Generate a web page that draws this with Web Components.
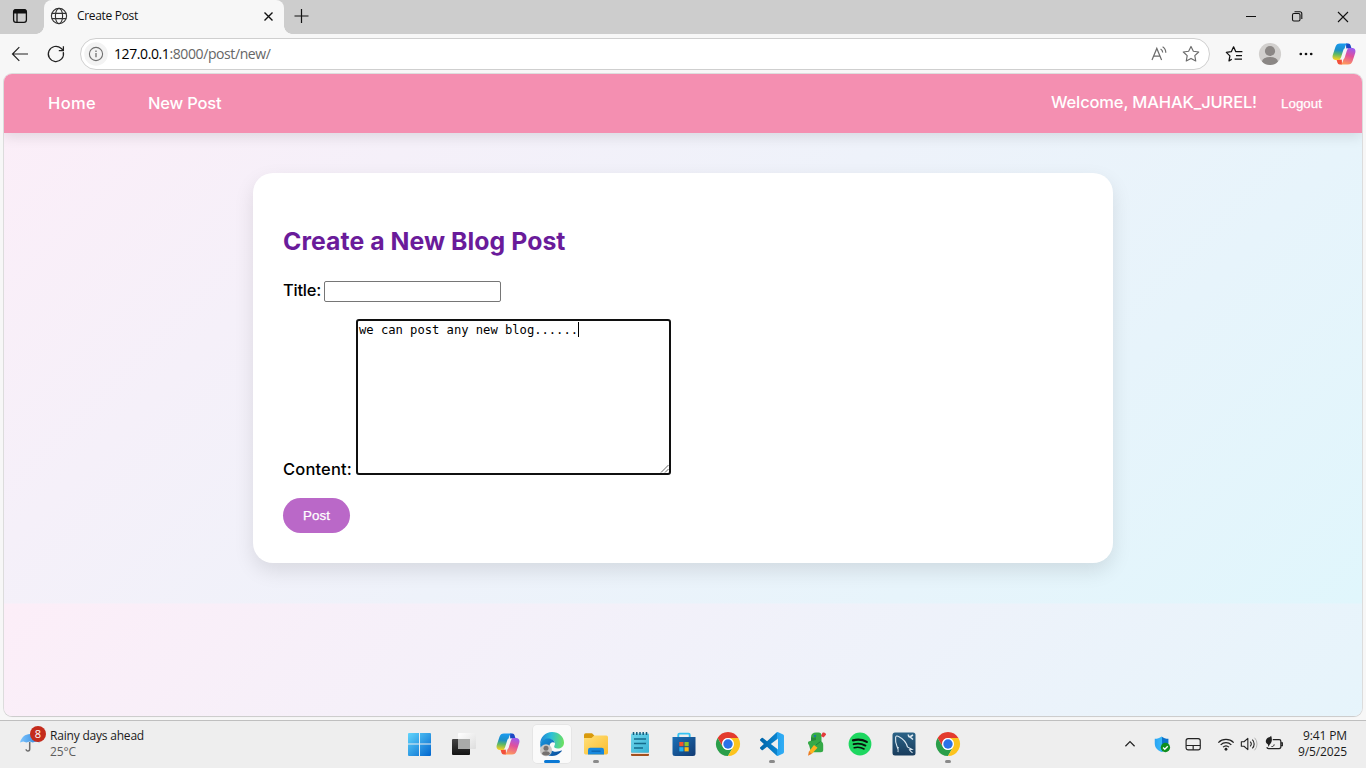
<!DOCTYPE html>
<html lang="en">
<head>
<meta charset="utf-8">
<title>Create Post</title>
<style>
html,body{margin:0;padding:0;width:1366px;height:768px;overflow:hidden;background:#f7f7f7;font-family:"Open Sans","Noto Sans",sans-serif}
</style>
</head>
<body>
<desk-top></desk-top>
<script>
const define = (name, html, after) => {
  const t = document.createElement('template');
  t.innerHTML = html;
  customElements.define(name, class extends HTMLElement {
    constructor() {
      super();
      this.attachShadow({ mode: 'open' }).append(t.content.cloneNode(true));
    }
    connectedCallback() { if (after) after(this, this.shadowRoot); }
  });
};

const copilot = `<defs><linearGradient id="a" x1="0.4" y1="0" x2="0.3" y2="1"><stop offset="0" stop-color="#1a9bf0"/><stop offset=".4" stop-color="#1c8fc8"/><stop offset=".65" stop-color="#5cb865"/><stop offset="1" stop-color="#ffd21e"/></linearGradient><linearGradient id="b" x1=".7" y1="0" x2=".4" y2="1"><stop offset="0" stop-color="#9b5cf0"/><stop offset=".45" stop-color="#e0509c"/><stop offset="1" stop-color="#ff9a5c"/></linearGradient></defs>
<path d="M14 1.4h2.2c1.4 0 2 .8 2.4 2l1 3.4h-5.4z" fill="#1b49c4"/><path d="M10 22.6H7.8c-1.4 0-2-.8-2.4-2l-1-3.4h5.4z" fill="#f2503a"/>
<path d="M8 1.4h8c-1.6.3-2.3 1.5-2.8 3.1L10 15c-.6 2-1.5 3-3.6 3H4C1 18 0 15.8.8 13L3.4 4.9C4.2 2.5 5.6 1.4 8 1.4z" fill="url(#a)"/>
<path d="M16 22.6H8c1.600-.3 2.300-1.500 2.800-3.100L14 9c.6-2 1.500-3 3.600-3H20c3 0 4 2.200 3.200 5l-2.600 8.100c-.8 2.400-2.200 3.500-4.600 3.500z" fill="url(#b)"/>
<path d="M13.300 6.600h3c-.9.600-1.300 1.500-1.700 2.800l-1.800 5.800c-.4 1.400-1 2.200-2.200 2.200h-3c.9-.6 1.300-1.500 1.700-2.800l1.800-5.800c.4-1.400 1-2.200 2.200-2.200z" fill="#f4f4f6"/>`;

const ICONS = {
  tabs: `<g fill="none" stroke="#111" stroke-width="1.3"><rect x="5.6" y="5.6" width="12.8" height="12.8" rx="2.4"/><path d="M9 9v9"/></g><path d="M5.4 9.500V8a3 3 0 0 1 3-3h7.2a3 3 0 0 1 3 3v1.500z" fill="#111"/>`,
  globe: `<g fill="none" stroke="#333" stroke-width="1.15"><circle cx="12" cy="12" r="7.6"/><ellipse cx="12" cy="12" rx="3.6" ry="7.6"/><path d="M4.8 9.4h14.4M4.8 14.6h14.4"/></g>`,
  x: `<path d="M8.500 8.500l8 8M16.500 8.500l-8 8" stroke="#111" stroke-width="1.4"/>`,
  plus: `<path d="M12.500 5v14M5.500 12h14" stroke="#111" stroke-width="1.2"/>`,
  min: `<path d="M7 12.5h10" stroke="#111"/>`,
  restore: `<g fill="none" stroke="#111" stroke-width="1.1"><rect x="7.5" y="9.500" width="7.5" height="7.5" rx="1.4"/><path d="M9.5 7.700h5.3a2 2 0 0 1 2 2v5.3"/></g>`,
  close: `<path d="M7 8l10 10M17 8l-10 10" stroke="#111" stroke-width="1.1"/>`,
  back: `<path d="M20 12H4.6M11.3 5.2L4.5 12l6.8 6.8" fill="none" stroke="#222" stroke-width="1.2"/>`,
  reload: `<path d="M19.3 10.2A7.6 7.6 0 1 1 17 6.3l2.2 2M19.4 4.2v4.4h-4.6" fill="none" stroke="#222" stroke-width="1.25"/>`,
  info: `<circle cx="12" cy="12" r="11.8" fill="#f3f3f3"/><circle cx="12" cy="12" r="6.6" fill="none" stroke="#707070" stroke-width="1.1"/><path d="M12 11v4.2M12 8.6v1.3" stroke="#707070" stroke-width="1.3"/>`,
  read: `<path d="M5 18L9.800 6.400 14.600 18M6.600 14.200h6.400M13.600 7c1.400.8 2.100 2 2.100 3.600M15.600 4.800c2.200 1.300 3.200 3.400 3.200 6" fill="none" stroke="#6b6b6b" stroke-width="1.2"/>`,
  star: `<path d="M12 4.4l2.35 4.9 5.35.7-3.9 3.7.95 5.3L12 16.4 7.25 19l.95-5.3-3.9-3.7 5.35-.7z" fill="none" stroke="#6b6b6b" stroke-width="1.15" stroke-linejoin="round"/>`,
  favs: `<path d="M9.8 17.2L7 18.9l.9-5-3.6-3.5 5-.7 2.3-4.9 2.2 4.900h6.6M14 13.5h6M12.6 17.2H20" fill="none" stroke="#111" stroke-width="1.25" stroke-linejoin="round"/>`,
  avatar: `<clipPath id="c"><circle cx="12" cy="12" r="11.1"/></clipPath><circle cx="12" cy="12" r="11.1" fill="#d2d0ce"/><g clip-path="url(#c)" fill="#8b8785"><circle cx="12" cy="9" r="5.1"/><ellipse cx="12" cy="19.7" rx="8" ry="4.8"/></g>`,
  dots: `<g fill="#111"><circle cx="6.8" cy="12" r="1.35"/><circle cx="12" cy="12" r="1.35"/><circle cx="17.2" cy="12" r="1.35"/></g>`,
  copilot,
  umbrella: `<defs><linearGradient id="u"><stop stop-color="#7cc4ff"/><stop offset="1" stop-color="#2c83d8"/></linearGradient></defs><path d="M11.7 13v7c0 2.6-3.6 2.6-3.6.2" fill="none" stroke="#6d6d6d" stroke-width="1.5"/><path d="M2 13.5C3.6 8 7 5.300 12 5c4.500.300 8 3 9.700 8.500l-3.600-1-3.400 1-3-1-3.300 1-3.200-1z" fill="url(#u)"/>`,
  win: `<defs><linearGradient id="w2" gradientUnits="userSpaceOnUse" x1="1" y1="1" x2="23" y2="23"><stop stop-color="#5fd3fb"/><stop offset="1" stop-color="#0468cf"/></linearGradient></defs><path d="M1 1H11V11.500H0V2a1 1 0 0 1 1-1zM12 1h10a1 1 0 0 1 1 1v9.500H12zM0 12.500h11V24H1a1 1 0 0 1-1-1zM12 12.500h11V23a1 1 0 0 1-1 1H12z" fill="url(#w2)"/>`,
  tasks: `<defs><linearGradient id="t" y2="1" x2="0"><stop stop-color="#444"/><stop offset="1" stop-color="#141414"/></linearGradient><linearGradient id="t2" y2="1"><stop stop-color="#fff"/><stop offset="1" stop-color="#ddd"/></linearGradient></defs><rect x="0" y="7" width="18" height="16" rx="1" fill="url(#t)"/><rect x="6" y="1" width="18" height="16" rx="1" fill="url(#t2)"/><path d="M6 7h12v10H6z" fill="#a9aaa9"/>`,
  edge: `<defs><linearGradient id="e" x1="0" y1=".3" x2="1" y2=".4"><stop stop-color="#1d83d6"/><stop offset=".45" stop-color="#2bbfd8"/><stop offset="1" stop-color="#6be062"/></linearGradient><linearGradient id="e2" x2="1" y2="1"><stop stop-color="#1696de"/><stop offset="1" stop-color="#0b4a99"/></linearGradient></defs><path d="M.2 12C0 5 5.500 0 12 0c7 0 12 5 12 10.500 0 4-3 6-6.200 6-2.800 0-4.200-1.300-3.500-2.500.9-1.500 1-3-.2-4.700C11 5.500 3 6 .2 12z" fill="url(#e)"/><path d="M.2 12C2 7.500 6 6 9.500 6.500 12.800 7 14.500 9 14.700 11c-1.800-1.800-4.900-.500-5.200 2.700-.300 4 3.700 7.300 9.500 5.600 1.500-.500 2.700-1.100 3-.8.200.3-3.400 5.500-10 5.500C5 24 0 18.500.2 12z" fill="url(#e2)"/><circle cx="6" cy="18.200" r="6" fill="#c9c7c5"/><circle cx="6" cy="16.300" r="2.500" fill="#75716f"/><path d="M1.900 22c.4-2 2-2.700 4.100-2.700s3.700.7 4.100 2.700a6 6 0 0 1-8.200 0z" fill="#75716f"/>`,
  folder: `<defs><linearGradient id="f" x2="1" y2="1"><stop stop-color="#ffe07a"/><stop offset="1" stop-color="#fbbc2c"/></linearGradient></defs><path d="M0 5.500h7.500L10 3.600h12.300A1.700 1.700 0 0 1 24 5.300v15.500a1.700 1.700 0 0 1-1.700 1.700H1.700A1.700 1.700 0 0 1 0 20.800z" fill="url(#f)"/><path d="M0 6V3a1.700 1.700 0 0 1 1.700-1.700H8l2.300 2.300L7.500 6z" fill="#d99a0c"/><path d="M4 22.500V18a2.200 2.200 0 0 1 2.200-2.200h11.600A2.200 2.200 0 0 1 20 18v4.500z" fill="#1788dd"/><path d="M7.500 18.500h9v1.400h-9z" fill="#0c67b3"/>`,
  notes: `<defs><linearGradient id="n" x2="1" y2="1"><stop stop-color="#71d6ec"/><stop offset="1" stop-color="#37b2d4"/></linearGradient></defs><rect x="3" y="19" width="18" height="5" rx="1" fill="#a3501e"/><path d="M3 20.300h18v1.500H3z" fill="#fff"/><rect x="3" y="1.500" width="18" height="19.300" rx="1" fill="url(#n)"/><path d="M5.500 0v3M8.800 0v3M12 0v3M15.200 0v3M18.500 0v3" stroke="#155d7d" stroke-width="1.500"/><path d="M6 7h12M6 11.500h12M6 16h9" stroke="#156b8c" stroke-width="1.600"/>`,
  store: `<defs><linearGradient id="s" x2="1" y2="1"><stop stop-color="#1a70b8"/><stop offset="1" stop-color="#123a72"/></linearGradient></defs><path d="M6.300 6V2.800a1.200 1.200 0 0 1 1.200-1.200h9a1.200 1.200 0 0 1 1.200 1.200V6" fill="none" stroke="#35c3f3" stroke-width="1.900"/><path d="M.5 5h23v16.500a2.500 2.500 0 0 1-2.500 2.500H3a2.500 2.500 0 0 1-2.500-2.500z" fill="url(#s)"/><path d="M7.300 10h4.200v4.200H7.300z" fill="#f2532b"/><path d="M12.500 10h4.200v4.200h-4.200z" fill="#8bc52c"/><path d="M7.300 15.200h4.200v4.200H7.300z" fill="#22b2f0"/><path d="M12.500 15.200h4.200v4.200h-4.200z" fill="#fdbb10"/>`,
  chrome: `<path d="M1.600 6A12 12 0 0 1 22.400 6H12A6 6 0 0 0 6.800 15z" fill="#e33b2e"/><path d="M1.600 6L6.800 15A6 6 0 0 0 17.200 15L12 24A12 12 0 0 1 1.600 6z" fill="#2a9e49"/><path d="M22.400 6A12 12 0 0 1 12 24L17.200 15A6 6 0 0 0 12 6z" fill="#fcc31e"/><circle cx="12" cy="12" r="5.900" fill="#fff"/><circle cx="12" cy="12" r="4.700" fill="#2a72e8"/>`,
  code: `<defs><linearGradient id="v"><stop stop-color="#0065a9"/><stop offset=".7" stop-color="#0b84cf"/><stop offset=".72" stop-color="#23a3ee"/><stop offset="1" stop-color="#33adf5"/></linearGradient></defs><path fill="url(#v)" d="M23.150 2.587L18.210.210a1.494 1.494 0 0 0-1.705.290l-9.460 8.630-4.120-3.128a.999.999 0 0 0-1.276.057L.327 7.261A1 1 0 0 0 .326 8.740L3.899 12 .326 15.260a1 1 0 0 0 .001 1.479L1.650 17.940a.999.999 0 0 0 1.276.057l4.120-3.128 9.460 8.630a1.492 1.492 0 0 0 1.704.290l4.942-2.377A1.500 1.500 0 0 0 24 20.060V3.939a1.500 1.500 0 0 0-.850-1.352zm-5.146 14.861L10.826 12l7.178-5.448v10.896z"/>`,
  parrot: `<path d="M7 5C7 2 9 .5 12 .5h2.500c2 0 3 1.200 3 3V9.500c1.200.7 1.700 2 1.700 3.500v5c0 1.500-.9 2.200-2.400 2.200H7L5 13c-1-.8-1.200-2.200-.8-3.200L8.500 8z" fill="#35aa47"/><path d="M7 5c1.500.9 3.200.9 5 .2V8L7 9.200z" fill="#268a3c"/><path d="M5 19.500l5-6.500 3.500 2.700-5.500 6z" fill="#ffb21e"/><path d="M4 23.800l1-4.800 3 2.700z" fill="#ec7a22"/><path d="M12 13l4.500-3.500" stroke="#1c813b" stroke-width="1"/><path d="M17 4l1.500-3.200c1.500-1 3.800.2 3.500 2L19.500 5.500z" fill="#e43b3b"/><circle cx="11" cy="4" r="1.100" fill="#176ebd"/>`,
  spotify: `<circle cx="12" cy="12" r="11.400" fill="#1ed760"/><g fill="none" stroke="#08140c" stroke-linecap="round"><path d="M5 8.400c4.500-1.300 9.700-.8 13.800 1.500" stroke-width="2.200"/><path d="M5.600 12.200c4-1.100 8.300-.6 11.800 1.400" stroke-width="1.900"/><path d="M6.200 15.800c3.400-.9 6.800-.5 9.900 1.200" stroke-width="1.500"/></g>`,
  mysql: `<defs><linearGradient id="m" y2="1" x2="0"><stop stop-color="#2b6387"/><stop offset="1" stop-color="#193c5c"/></linearGradient></defs><rect x=".5" y=".5" width="23" height="23" rx="2.500" fill="url(#m)"/><path d="M6 20c.5-2 .2-3.300-.8-5C3.800 12 3.300 8 3.600 5.500c.2-1.500 1.400-1.900 3-1C11.500 7 14.500 11 15.500 15l4.500 2.500-2.500.3c.6 1.200 1.800 2.200 3 3M5.200 15l1.500 1" fill="none" stroke="#dce8f0" stroke-width="1.100"/><path d="M16.500 2.500c-.3 1 .3 2.300 1.500 2.500l3 2.500M18.500 4.500l2.500-1.500" fill="none" stroke="#dce8f0" stroke-width="1.600"/>`,
  up: `<path d="M6.500 14.700L12 9.200l5.500 5.500" fill="none" stroke="#222" stroke-width="1.500"/>`,
  shield: `<defs><linearGradient id="d"><stop stop-color="#2aa4f4"/><stop offset=".5" stop-color="#38b8f8"/><stop offset=".51" stop-color="#0c73cc"/><stop offset="1" stop-color="#0c73cc"/></linearGradient></defs><path d="M11.500 3c2.400 2 5 2.700 8.200 2.700V11c0 5-3 8.500-8.200 10.500C6.300 19.500 3.300 16 3.300 11V5.700C6.500 5.700 9.100 5 11.500 3z" fill="url(#d)"/><circle cx="16.100" cy="16.200" r="5.600" fill="#0f8f1f"/><path d="M13.300 16.300l2 2 3.600-3.700" fill="none" stroke="#fff" stroke-width="1.600"/>`,
  pad: `<g fill="none" stroke="#222" stroke-width="1.400"><rect x="3.700" y="5.500" width="17" height="13.500" rx="2.500"/><path d="M3.700 13.800h17M12.200 13.800V19"/></g>`,
  wifi: `<g fill="none" stroke="#222" stroke-width="1.450"><path d="M2.800 10.300a13.200 13.200 0 0 1 18.400 0M5.600 13a9.200 9.200 0 0 1 12.800 0M8.400 15.800a5.300 5.300 0 0 1 7.200 0"/></g><circle cx="12" cy="18.300" r="1.700" fill="#222"/>`,
  sound: `<g fill="none" stroke="#222" stroke-width="1.300" stroke-linejoin="round"><path d="M2.800 9.300h3.200l4.600-4v13.400l-4.600-4H2.800z"/><path d="M13.400 9.200a4 4 0 0 1 0 5.600M16 6.800a7.300 7.300 0 0 1 0 10.400"/></g><path d="M18.700 4.500a11 11 0 0 1 0 15" fill="none" stroke="#b5b5b5" stroke-width="1.200"/>`,
  battery: `<path d="M10.500 6.800h7.700a2 2 0 0 1 2 2v6.500a2 2 0 0 1-2 2.200H5.500a2 2 0 0 1-2-1.800M20.500 10.500h1.500v3.500h-1.500" fill="none" stroke="#222" stroke-width="1.500"/><path d="M8.500 2c1.500 3.500 1.500 8-1.800 10.800l-1.500 2.700-.4-3C1 11 1.500 6 5 4.200c2-.8 3-1.200 3.500-2.200z" fill="#222"/><path d="M9 15c2 .3 3-.8 3.200-2.500" fill="none" stroke="#222" stroke-width="1.200"/>`
};

define('ui-icon', `<style>:host{display:block;flex:none}svg{display:block;overflow:visible}</style><svg viewBox="0 0 24 24"></svg>`, (el, root) => {
  const s = el.getAttribute('size') || 24, svg = root.querySelector('svg');
  svg.setAttribute('width', s);
  svg.setAttribute('height', s);
  svg.innerHTML = ICONS[el.getAttribute('name')];
});

/* Spreads a run of text evenly over a given width. */
define('fit-text', `<style>:host{display:block;flex:none;white-space:nowrap}span{display:inline-block}</style><span><slot></slot></span>`, (el, root) => {
  const w = +el.getAttribute('w'), span = root.querySelector('span');
  el.style.width = w + 'px';
  const n = el.textContent.length;
  span.style.letterSpacing = ((w - span.getBoundingClientRect().width) / n).toFixed(3) + 'px';
});

define('window-tabs', `<style>
:host{display:flex;height:34px;background:#cdcdcd;align-items:flex-start}
.side{width:44px;height:34px;box-sizing:border-box;padding:4px 0 0 8px}
.tab{width:240px;height:34px;box-sizing:border-box;background:#f7f7f7;border-radius:8px 8px 0 0;display:flex;align-items:flex-start;padding:4px 4px 0 3px;position:relative}
.tab::before,.tab::after{content:"";position:absolute;bottom:0;width:8px;height:8px}
.tab::before{left:-8px;background:radial-gradient(circle at 0 0,transparent 7.500px,#f7f7f7 8px)}
.tab::after{right:-8px;background:radial-gradient(circle at 100% 0,transparent 7.500px,#f7f7f7 8px)}
fit-text{font-size:12px;line-height:24px;color:#111;margin:0 auto 0 6px}
.plus{margin:4px auto 0 5px}
.win{display:flex;gap:22px;padding:4px 11px 0 0}
</style>
<div class="side"><ui-icon name="tabs"></ui-icon></div>
<div class="tab"><ui-icon name="globe"></ui-icon><fit-text w="61">Create Post</fit-text><ui-icon name="x"></ui-icon></div>
<ui-icon class="plus" name="plus"></ui-icon>
<div class="win"><ui-icon name="min"></ui-icon><ui-icon name="restore"></ui-icon><ui-icon name="close"></ui-icon></div>`);

define('address-bar', `<style>
:host{display:flex;height:40px;align-items:center;background:#f7f7f7;box-sizing:border-box;padding:0 10px 0 8px}
.gap{margin-left:12px}
.pill{margin-left:12px;width:1130px;height:32px;box-sizing:border-box;border:1px solid #cfcfcf;border-radius:16px;background:#fff;display:flex;align-items:center;padding:0 6px 0 3px}
.url{margin:0 auto 0 6px;font-size:14px;line-height:20px;color:#666}
b{font-weight:400;color:#000}
.end{display:flex;gap:12px;margin-left:12px}
.end .c{margin-left:2px}
</style>
<ui-icon name="back"></ui-icon><ui-icon class="gap" name="reload"></ui-icon>
<div class="pill"><ui-icon name="info"></ui-icon><fit-text class="url" w="156.500"><b>127.0.0.1</b>:8000/post/new/</fit-text><ui-icon name="read" style="margin-right:8px"></ui-icon><ui-icon name="star"></ui-icon></div>
<div class="end"><ui-icon name="favs"></ui-icon><ui-icon name="avatar"></ui-icon><ui-icon name="dots"></ui-icon><ui-icon class="c" name="copilot"></ui-icon></div>`);

define('site-nav', `<style>
:host{display:flex;height:59px;box-sizing:border-box;padding:0 40px 0 44px;align-items:center;background:#f48fb1;color:#fff;box-shadow:0 4px 12px rgba(0,0,0,.1);font:500 16.500px/24px Inter,sans-serif}
fit-text{padding-bottom:1px}
.push{margin-right:auto;margin-left:52px}
.who{padding-bottom:3px}
.out{font:13.333px/16px "Liberation Sans",sans-serif;margin-left:24px;padding:0;-webkit-text-stroke:.25px #fff}
</style>
<fit-text w="48">Home</fit-text><fit-text class="push" w="73.500">New Post</fit-text>
<fit-text class="who" w="206">Welcome, MAHAK_JUREL!</fit-text><fit-text class="out" w="41">Logout</fit-text>`);

define('post-form', `<style>
:host{display:block;width:860px;height:390px;box-sizing:border-box;padding:50px 30px 30px;margin:40px auto 0;background:#fff;border-radius:20px;box-shadow:0 8px 20px rgba(0,0,0,.1);font:500 16.500px/24px Inter,sans-serif;color:#000}
h2{margin:0;font:700 24.800px/36px Inter,sans-serif;color:#6a1b9a}
.row{display:flex}
.title{margin-top:20px;height:24px;align-items:flex-start}
.title fit-text{margin-top:-1px}
input{box-sizing:border-box;width:177px;height:21px;margin:2px 0 0 3px;border:1px solid #767676;border-radius:2px;padding:1px 2px;background:#fff}
.content{margin-top:16px;align-items:flex-end;height:156px}
.area{position:relative;box-sizing:border-box;width:315px;height:156px;margin-left:4px;border:2px solid #101010;border-radius:3px;padding:0 1px 1px;display:flex;align-items:flex-start;font:12.200px/18px "DejaVu Sans Mono",monospace}
.area i{width:1px;height:15px;background:#000;margin-top:1px}
.area svg{position:absolute;right:0;bottom:0}
.content>fit-text{margin-bottom:-6px}
.btn{width:67px;height:35px;margin-top:23px;border-radius:17.500px;background:#ba68c8;color:#fff;display:flex;align-items:center;justify-content:center;font:13.333px/16px "Liberation Sans",sans-serif;-webkit-text-stroke:.25px #fff}
</style>
<h2><fit-text w="282.500">Create a New Blog Post</fit-text></h2>
<div class="row title"><fit-text w="38">Title:</fit-text><input type="text" aria-label="Title"></div>
<div class="row content"><fit-text w="69">Content:</fit-text>
<div class="area"><fit-text w="219">we can post any new blog......</fit-text><i></i><svg width="9" height="9"><path d="M1 8.500L8.500 1M5 8.500L8.500 5" stroke="#555" stroke-width=".9"/></svg></div></div>
<div class="btn"><fit-text w="27">Post</fit-text></div>`);

define('web-page', `<style>
:host{display:block;height:642px;margin:0 4px;border-radius:8px;overflow:hidden;box-shadow:0 0 0 1px rgba(0,0,0,.1),0 1px 1px rgba(0,0,0,.08);background:linear-gradient(135deg,#fceef8,#e0f6fc) 0 0/100% 529.500px}
</style><site-nav></site-nav><post-form></post-form>`);

define('app-button', `<style>
:host{display:block;width:44px;height:47px;flex:none;position:relative}
.tile{margin:4px 3px 0;height:38px;border-radius:4px;box-sizing:border-box;display:grid;place-items:center}
:host([state=active]) .tile{background:#fafafa;box-shadow:0 0 0 .700px #e2e2e2}
.bar{position:absolute;left:19px;bottom:5px;width:6px;height:3px;border-radius:2px;background:#8a8a8a;display:none}
:host([state]) .bar{display:block}
:host([state=active]) .bar{left:14px;width:16px;background:#0a78d4}
</style><div class="tile"><slot></slot></div><div class="bar"></div>`);

define('task-bar', `<style>
:host{display:flex;height:48px;box-sizing:border-box;border-top:1px solid #bfbfbf;background:#eeeeee;color:#1b1b1b}
.weather{width:398px;display:flex;box-sizing:border-box;padding:5px 0 0 18px}
.pic{position:relative;width:22px;padding-top:3px}
.badge{position:absolute;left:12px;top:0;width:16px;height:16px;border-radius:8px;background:#c42b1c;color:#fff;font:11px/16px "Open Sans",sans-serif;text-align:center}
.lines{margin-left:10px;font-size:12px;line-height:16px;padding-top:2px}
.lines .g{color:#5d5d5d}
.apps{display:flex}
.tray{display:flex;align-items:center;margin-left:150px;padding-bottom:2px}
.clock{margin-left:auto;padding:7px 19px 0 0;font-size:12px;line-height:16px}
.clock fit-text{margin-left:auto}
</style>
<div class="weather"><div class="pic"><ui-icon name="umbrella" size="24"></ui-icon><div class="badge">8</div></div><div class="lines"><fit-text w="94">Rainy days ahead</fit-text><fit-text class="g" w="26">25°C</fit-text></div></div>
<div class="apps">
<app-button><ui-icon name="win"></ui-icon></app-button><app-button><ui-icon name="tasks"></ui-icon></app-button><app-button><ui-icon name="copilot"></ui-icon></app-button><app-button state="active"><ui-icon name="edge"></ui-icon></app-button><app-button state="open"><ui-icon name="folder"></ui-icon></app-button><app-button><ui-icon name="notes"></ui-icon></app-button><app-button><ui-icon name="store"></ui-icon></app-button><app-button><ui-icon name="chrome"></ui-icon></app-button><app-button state="open"><ui-icon name="code"></ui-icon></app-button><app-button><ui-icon name="parrot"></ui-icon></app-button><app-button><ui-icon name="spotify"></ui-icon></app-button><app-button><ui-icon name="mysql"></ui-icon></app-button><app-button state="open"><ui-icon name="chrome"></ui-icon></app-button>
</div>
<div class="tray"><ui-icon name="up" size="20"></ui-icon><ui-icon name="shield" size="20" style="margin-left:12px"></ui-icon><ui-icon name="pad" size="20" style="margin-left:11px"></ui-icon><ui-icon name="wifi" size="20" style="margin-left:13px"></ui-icon><ui-icon name="sound" size="20" style="margin-left:3px"></ui-icon><ui-icon name="battery" size="20" style="margin-left:5px"></ui-icon></div>
<div class="clock"><fit-text w="44">9:41 PM</fit-text><fit-text w="49">9/5/2025</fit-text></div>`);

define('desk-top', `<style>
:host{display:flex;flex-direction:column;width:1366px;height:768px;background:#f7f7f7}
.frame{height:646px}
</style><window-tabs></window-tabs><address-bar></address-bar><div class="frame"><web-page></web-page></div><task-bar></task-bar>`);
</script>
</body>
</html>
